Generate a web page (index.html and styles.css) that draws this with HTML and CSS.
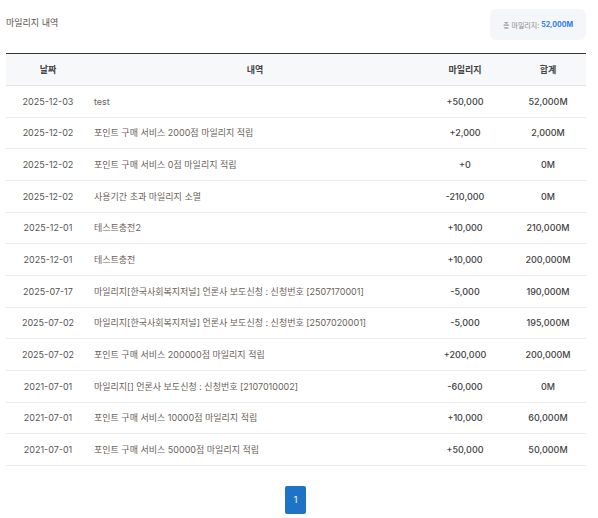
FILE: index.html
```html
<!DOCTYPE html>
<html lang="ko">
<head>
<meta charset="utf-8">
<link rel="stylesheet" href="styles.css">
</head>
<body>
<div class="wrap">
  <div class="top">
    <h2 class="title">마일리지 내역</h2>
    <div class="total">총 마일리지: <strong>52,000M</strong></div>
  </div>
  <table class="tbl">
    <colgroup>
      <col class="c-date"><col class="c-desc"><col class="c-amt"><col class="c-sum">
    </colgroup>
    <thead>
      <tr><th>날짜</th><th>내역</th><th>마일리지</th><th>합계</th></tr>
    </thead>
    <tbody>
      <tr><td class="d">2025-12-03</td><td class="t">test</td><td class="a">+50,000</td><td class="s">52,000M</td></tr>
      <tr><td class="d">2025-12-02</td><td class="t">포인트 구매 서비스 2000점 마일리지 적립</td><td class="a">+2,000</td><td class="s">2,000M</td></tr>
      <tr><td class="d">2025-12-02</td><td class="t">포인트 구매 서비스 0점 마일리지 적립</td><td class="a">+0</td><td class="s">0M</td></tr>
      <tr><td class="d">2025-12-02</td><td class="t">사용기간 초과 마일리지 소멸</td><td class="a">-210,000</td><td class="s">0M</td></tr>
      <tr><td class="d">2025-12-01</td><td class="t">테스트충전2</td><td class="a">+10,000</td><td class="s">210,000M</td></tr>
      <tr><td class="d">2025-12-01</td><td class="t">테스트충전</td><td class="a">+10,000</td><td class="s">200,000M</td></tr>
      <tr><td class="d">2025-07-17</td><td class="t">마일리지[한국사회복지저널] 언론사 보도신청 : 신청번호 [2507170001]</td><td class="a">-5,000</td><td class="s">190,000M</td></tr>
      <tr><td class="d">2025-07-02</td><td class="t">마일리지[한국사회복지저널] 언론사 보도신청 : 신청번호 [2507020001]</td><td class="a">-5,000</td><td class="s">195,000M</td></tr>
      <tr><td class="d">2025-07-02</td><td class="t">포인트 구매 서비스 200000점 마일리지 적립</td><td class="a">+200,000</td><td class="s">200,000M</td></tr>
      <tr><td class="d">2021-07-01</td><td class="t">마일리지[] 언론사 보도신청 : 신청번호 [2107010002]</td><td class="a">-60,000</td><td class="s">0M</td></tr>
      <tr><td class="d">2021-07-01</td><td class="t">포인트 구매 서비스 10000점 마일리지 적립</td><td class="a">+10,000</td><td class="s">60,000M</td></tr>
      <tr><td class="d">2021-07-01</td><td class="t">포인트 구매 서비스 50000점 마일리지 적립</td><td class="a">+50,000</td><td class="s">50,000M</td></tr>
    </tbody>
  </table>
  <div class="pager">
    <a class="page active">1</a>
  </div>
</div>
</body>
</html>
```
FILE: styles.css
```css
* { box-sizing: border-box; }
html, body { margin: 0; padding: 0; background: #fff; }
body {
  font-family: Inter, "Noto Sans CJK KR", "Noto Sans", sans-serif;
  color: #555;
}
.wrap { padding: 9px 12px 0 6px; }
.top {
  display: flex;
  justify-content: space-between;
  align-items: center;
  height: 31px;
}
.title {
  margin: 0;
  font-size: 9px;
  font-weight: 400;
  color: #5a5247;
  margin-top: -5px;
}
.total {
  background: #f4f6f9;
  border-radius: 6px;
  height: 31px;
  width: 96px;
  display: flex;
  align-items: center;
  justify-content: center;
  font-size: 7px;
  color: #888;
}
.total strong { color: #2c7be5; font-weight: 700; margin-left: 2px; }
.tbl {
  margin-top: 13px;
  width: 100%;
  border-collapse: collapse;
  border-top: 1.5px solid #333;
  table-layout: fixed;
}
.c-date { width: 84px; }
.c-desc { width: auto; }
.c-amt { width: 90px; }
.c-sum { width: 76px; }
.tbl th {
  background: #f7f8fa;
  height: 32px;
  font-size: 9px;
  font-weight: 600;
  color: #444;
  border-bottom: 1px solid #e2e4e8;
  text-align: center;
  padding: 0;
}
.tbl td {
  height: 31.67px;
  border-bottom: 1px solid #ececec;
  font-size: 9px;
  padding: 0;
  white-space: nowrap;
}
.tbl td.d { text-align: center; color: #555; }
.tbl td.t { text-align: left; padding-left: 4px; color: #6a6259; }
.tbl td.a { text-align: center; color: #444; font-weight: 500; }
.tbl td.s { text-align: center; color: #444; font-weight: 500; }
.pager {
  display: flex;
  justify-content: center;
  margin-top: 20px;
  padding-right: 1px;
}
.page {
  display: flex;
  align-items: center;
  justify-content: center;
  width: 21px;
  height: 28px;
  border-radius: 2px;
  font-size: 9px;
  color: #fff;
  background: #1f73c6;
}
```
